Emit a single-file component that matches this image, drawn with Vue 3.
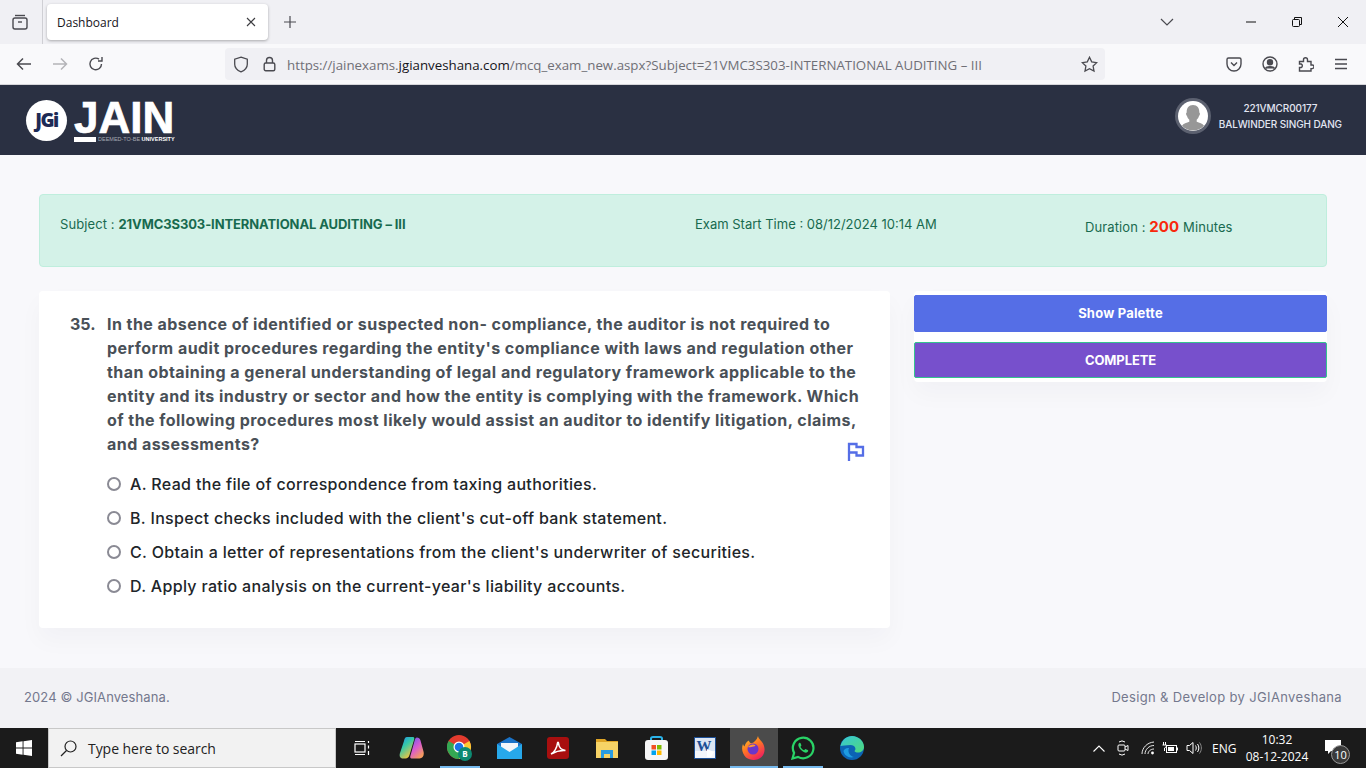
<script setup>
const question = [
  'In the absence of identified or suspected non- compliance, the auditor is not required to',
  "perform audit procedures regarding the entity's compliance with laws and regulation other",
  'than obtaining a general understanding of legal and regulatory framework applicable to the',
  'entity and its industry or sector and how the entity is complying with the framework. Which',
  'of the following procedures most likely would assist an auditor to identify litigation, claims,',
  'and assessments?',
]

const options = [
  'A. Read the file of correspondence from taxing authorities.',
  "B. Inspect checks included with the client's cut-off bank statement.",
  'C. Obtain a letter of representations from the client\'s underwriter of securities.',
  "D. Apply ratio analysis on the current-year's liability accounts.",
]
</script>

<template>
  <div class="screen">
    <!-- browser chrome -->
    <div class="tabbar">
      <div class="tab-all">
        <svg width="18" height="18" viewBox="0 0 18 18" fill="none" stroke="#4a4a50" stroke-width="1.4">
          <path d="M4 2.500h10" />
          <rect x="2" y="5" width="14" height="11" rx="2" />
          <path d="M7 9h4" />
        </svg>
      </div>
      <div class="tab">
        <span>Dashboard</span>
        <svg width="10" height="10" viewBox="0 0 10 10" stroke="#3c3c40" stroke-width="1.1"><path d="M1 1l8 8M9 1l-8 8" /></svg>
      </div>
      <svg class="tab-new" width="14" height="14" viewBox="0 0 14 14" stroke="#4a4a50" stroke-width="1.2"><path d="M7 1v12M1 7h12" /></svg>
      <div class="grow"></div>
      <svg class="tab-list" width="14" height="8" viewBox="0 0 14 8" fill="none" stroke="#4a4a50" stroke-width="1.2"><path d="M1 1l6 6 6-6" /></svg>
      <div class="win-btns">
        <svg width="10" height="10" viewBox="0 0 10 10" stroke="#111" stroke-width="1"><path d="M0 5h10" /></svg>
        <svg width="10" height="10" viewBox="0 0 10 10" fill="none" stroke="#111" stroke-width="1"><rect x="0.5" y="2.500" width="7" height="7" rx="1" /><path d="M2.500 2.500V.5h7v7H7.500" /></svg>
        <svg width="10" height="10" viewBox="0 0 10 10" stroke="#111" stroke-width="1"><path d="M0 0l10 10M10 0L0 10" /></svg>
      </div>
    </div>

    <div class="navbar">
      <svg class="nav-ic" width="16" height="14" viewBox="0 0 16 14" fill="none" stroke="#4a4a50" stroke-width="1.5"><path d="M15 7H2M7 1.500L1.500 7 7 12.500" /></svg>
      <svg class="nav-ic" width="16" height="14" viewBox="0 0 16 14" fill="none" stroke="#b4b4b8" stroke-width="1.5"><path d="M1 7h13M9 1.500L14.500 7 9 12.500" /></svg>
      <svg class="nav-ic" width="16" height="16" viewBox="0 0 16 16" fill="none" stroke="#4a4a50" stroke-width="1.4"><path d="M13.500 8A5.800 5.800 0 1 1 11 3.200" /><path d="M14 1v4h-4" /></svg>
      <div class="urlbar">
        <svg class="url-shield" width="16" height="17" viewBox="0 0 16 17" fill="none" stroke="#4a4a50" stroke-width="1.3"><path d="M8 1.200l6.300 2v5c0 3.600-2.800 6.200-6.300 7.600-3.500-1.400-6.300-4-6.300-7.600v-5z" /></svg>
        <svg class="url-lock" width="13" height="16" viewBox="0 0 13 16" fill="none" stroke="#4a4a50" stroke-width="1.4"><path d="M3.500 7V4.500a3 3 0 0 1 6 0V7" /><rect x="1.200" y="7" width="10.600" height="7.800" rx="1.500" /></svg>
        <div class="url"><span class="dim">https://jainexams.</span>jgianveshana.com<span class="dim">/mcq_exam_new.aspx?Subject=21VMC3S303-INTERNATIONAL AUDITING – III</span></div>
        <svg width="17" height="17" viewBox="0 0 17 17" fill="none" stroke="#4a4a50" stroke-width="1.3"><path d="M8.500 1.300l2.200 4.600 5 .7-3.600 3.500.9 5-4.500-2.400L4 15.100l.9-5L1.300 6.600l5-.7z" /></svg>
      </div>
      <div class="nav-right">
        <svg width="16" height="15" viewBox="0 0 16 15" fill="none" stroke="#4a4a50" stroke-width="1.4"><path d="M2.500 1h11A1.500 1.500 0 0 1 15 2.500V7A7 7 0 0 1 1 7V2.500A1.500 1.500 0 0 1 2.500 1z" /><path d="M5 5.500l3 3 3-3" /></svg>
        <svg width="16" height="16" viewBox="0 0 16 16" fill="none" stroke="#4a4a50" stroke-width="1.4"><circle cx="8" cy="8" r="7" /><circle cx="8" cy="6.300" r="2.500" fill="#4a4a50" /><path d="M3.500 12.500c1-2.300 8-2.300 9 0" fill="#4a4a50" /></svg>
        <svg width="16" height="16" viewBox="0 0 16 16" fill="none" stroke="#4a4a50" stroke-width="1.4"><path d="M1.500 5.500h4V3.800a2 2 0 0 1 4 0v1.700h3.500V9h1.200a1.800 1.800 0 0 1 0 3.600H13V15H1.500v-3.500h1.700a1.900 1.900 0 0 0 0-3.500H1.500z" /></svg>
        <svg width="14" height="12" viewBox="0 0 14 12" stroke="#4a4a50" stroke-width="1.400"><path d="M1 1.500h12M1 6h12M1 10.500h12" /></svg>
      </div>
    </div>

    <!-- site header -->
    <header class="site-header">
      <div class="logo">
        <div class="logo-badge">JGi</div>
        <div class="logo-word">
          <div class="logo-jain">JAIN</div>
          <div class="logo-sub"><i></i><span>DEEMED-TO-BE <b>UNIVERSITY</b></span></div>
        </div>
      </div>
      <div class="user">
        <div class="avatar">
          <svg width="30" height="30" viewBox="0 0 30 30"><circle cx="15" cy="15" r="15" fill="#fff" /><path d="M15 4c4.500 0 6.500 3.500 6.300 7.500.9.300.9 2.500-.3 3.500-.5 1.800-1.300 3-2.300 3.800v2c2.500 1 6 1.700 7.300 4a15 15 0 0 1-22 0c1.300-2.300 4.800-3 7.300-4v-2c-1-.8-1.800-2-2.300-3.800-1.200-1-1.200-3.200-.3-3.500C8.500 7.500 10.500 4 15 4z" fill="#979797" /></svg>
        </div>
        <div class="user-text">
          <div>221VMCR00177</div>
          <div>BALWINDER SINGH DANG</div>
        </div>
      </div>
    </header>

    <main class="content">
      <div class="alert">
        <div class="alert-subject">Subject : <b>21VMC3S303-INTERNATIONAL AUDITING – III</b></div>
        <div class="alert-start">Exam Start Time : 08/12/2024 10:14 AM</div>
        <div class="alert-duration">Duration : <b>200</b> Minutes</div>
      </div>

      <div class="columns">
        <section class="q-card">
          <div class="q-head">
            <div class="q-num">35.</div>
            <div class="q-text">
              <div v-for="line in question" :key="line">{{ line }}</div>
            </div>
          </div>
          <div class="q-flag">
            <svg width="18" height="19" viewBox="0 0 18 19" fill="none" stroke="#556ee6" stroke-width="2.300"><path d="M2 19V2h7.500v3H16v8.500H9.500v-3H2" /></svg>
          </div>
          <div class="options">
            <label v-for="opt in options" :key="opt" class="option">
              <span class="radio"></span>
              <span>{{ opt }}</span>
            </label>
          </div>
        </section>

        <aside class="side">
          <button class="btn btn-palette">Show Palette</button>
          <button class="btn btn-complete">COMPLETE</button>
        </aside>
      </div>
    </main>

    <footer class="site-footer">
      <span>2024 © JGIAnveshana.</span>
      <span class="foot-right">Design &amp; Develop by JGIAnveshana</span>
    </footer>

    <!-- windows taskbar -->
    <div class="taskbar">
      <div class="start">
        <svg width="16" height="16" viewBox="0 0 16 16" fill="#fff"><path d="M0 2.300L6.600 1.300V7.500H0zM7.500 1.200L16 0v7.500H7.500zM0 8.400h6.600v6.300L0 13.700zM7.500 8.400H16V16l-8.500-1.200z" /></svg>
      </div>
      <div class="search">
        <svg width="17" height="17" viewBox="0 0 17 17" fill="none" stroke="#222" stroke-width="1.200"><circle cx="10.500" cy="6.500" r="5.500" /><path d="M6.500 10.500L1 16" /></svg>
        <span>Type here to search</span>
      </div>
      <div class="apps">
        <div class="app">
          <svg width="16" height="16" viewBox="0 0 16 16" fill="none" stroke="#fff" stroke-width="1.200"><rect x="1" y="4" width="10" height="8" /><path d="M1 1.500h10M1 14.500h10M14.500 1v2M14.500 5.500v3M14.500 11v4" /></svg>
        </div>
        <div class="app">
          <svg width="25" height="24" viewBox="0 0 25 24">
            <defs>
              <linearGradient id="cpA" x1="0" y1="0" x2="0.6" y2="1"><stop offset="0" stop-color="#1f8cf0" /><stop offset="0.45" stop-color="#35c9a8" /><stop offset="1" stop-color="#f7c63c" /></linearGradient>
              <linearGradient id="cpB" x1="0" y1="0" x2="0.6" y2="1"><stop offset="0" stop-color="#5a5cf0" /><stop offset="0.55" stop-color="#d95cd0" /><stop offset="1" stop-color="#f59a60" /></linearGradient>
            </defs>
            <path d="M8 1h6c1.500 0 1.500 1.500 1 3l-4.500 15c-.6 2-2 3.500-4 3.500H4c-3 0-4-2.500-3-5.500L5 5c.6-2.500 1.200-4 3-4z" fill="url(#cpA)" />
            <path d="M18 1.500c1.500 0 3 1 3.500 3l3 11c.9 3.500-.5 7-4 7h-8c-1.500 0-1.500-1.500-1-3l4-14.500C16 3 16.500 1.500 18 1.500z" fill="url(#cpB)" />
          </svg>
        </div>
        <div class="app active-line">
          <svg width="26" height="26" viewBox="0 0 26 26">
            <circle cx="12" cy="12" r="12" fill="#e33b2e" />
            <path d="M12 12L22.400 6A12 12 0 0 1 12 24z" fill="#fcc934" />
            <path d="M12 12L12 24A12 12 0 0 1 1.600 6z" fill="#34a853" />
            <circle cx="12" cy="12" r="5.500" fill="#fff" /><circle cx="12" cy="12" r="4.300" fill="#1a73e8" />
            <circle cx="18" cy="19" r="7" fill="#0d8a72" />
            <text x="18" y="22" text-anchor="middle" class="b-letter">B</text>
          </svg>
        </div>
        <div class="app">
          <svg width="25" height="22" viewBox="0 0 25 22">
            <path d="M0 7L12.500 0 25 7v15H0z" fill="#1a73c8" />
            <path d="M4 6h17v6l-8.500 5L4 12z" fill="#f2f6fa" />
            <path d="M0 7l12.500 8L25 7v15H0z" fill="#27a8ea" />
          </svg>
        </div>
        <div class="app">
          <svg width="22" height="22" viewBox="0 0 22 22">
            <rect width="22" height="22" rx="3" fill="#a80f0f" />
            <path d="M4 17c3-1.500 6-6 6.500-11 0-1 1-1 1 0 .3 4 3 7 7 7.500-3.500-.3-9 .5-14.500 3.500z" fill="none" stroke="#fff" stroke-width="1.500" />
          </svg>
        </div>
        <div class="app">
          <svg width="22" height="20" viewBox="0 0 22 20">
            <path d="M0 1h9l2 2h11v17H0z" fill="#e0a526" />
            <rect y="4" width="22" height="16" fill="#f7d366" />
            <path d="M5 12h12v8h-3v-4H8v4H5z" fill="#2a9ce0" />
          </svg>
        </div>
        <div class="app">
          <svg width="23" height="24" viewBox="0 0 23 24">
            <path d="M6 5V2.500C6 1 7 1 8 1h7c1 0 2 0 2 1.500V5" fill="none" stroke="#2bb3e8" stroke-width="2" />
            <rect y="4" width="23" height="20" rx="3" fill="#f6f6f6" />
            <rect x="6.500" y="9" width="4.500" height="4.500" fill="#f25022" /><rect x="12" y="9" width="4.500" height="4.500" fill="#7fba00" />
            <rect x="6.500" y="14.500" width="4.500" height="4.500" fill="#00a4ef" /><rect x="12" y="14.500" width="4.500" height="4.500" fill="#ffb900" />
          </svg>
        </div>
        <div class="app">
          <svg width="22" height="22" viewBox="0 0 22 22">
            <rect width="22" height="22" fill="#1c4f96" />
            <rect x="1" y="1" width="20" height="20" fill="#f4f6fa" />
            <rect x="1" y="1" width="20" height="13" fill="#dbe6f4" />
            <text x="10" y="14" text-anchor="middle" class="w-letter">W</text>
            <path d="M13 12l7 3-3 5h-4z" fill="#fff" />
          </svg>
        </div>
        <div class="app app-on active-line">
          <svg width="24" height="24" viewBox="0 0 24 24">
            <defs>
              <linearGradient id="ffA" x1="0" y1="0" x2="0.6" y2="1"><stop offset="0" stop-color="#ffd02c" /><stop offset="0.5" stop-color="#ff7a22" /><stop offset="1" stop-color="#f0255a" /></linearGradient>
            </defs>
            <path d="M16 0c.5 3 3 4 5 7.500 2.500 4.500 2 10-1.500 13.500-4 3.800-11 3.800-15.500.5C.5 18 -1 13 1 8c.3 1.200.8 2 1.500 2.500C3 8 4.500 5.500 7 4.500c0 1.500 1 2.500 2.500 2.800C12 6.500 15 4 16 0z" fill="url(#ffA)" />
            <circle cx="11" cy="13" r="5.500" fill="#6b35c9" />
            <path d="M6 11c1.500-2 5-3.500 7-2 .8.500 0 1.500-1.500 1.500C9.500 10.500 7.500 12 6 11z" fill="#ff9a2e" />
          </svg>
        </div>
        <div class="app active-line">
          <svg width="24" height="24" viewBox="0 0 24 24">
            <path d="M1.500 22.500l1.600-5.600A10.300 10.300 0 1 1 7 20.900z" fill="none" stroke="#29d366" stroke-width="2.200" />
            <path d="M8.500 6.800c-1.300.8-1.500 2.500-.6 4.300 1.100 2.300 3 4.200 5.300 5.200 1.800.7 3.300.3 3.900-1 .3-.6 0-1-.4-1.200l-1.800-.9c-.5-.2-.8 0-1.100.4-.4.600-.7.700-1.300.4-1.200-.6-2.200-1.600-2.800-2.800-.2-.5-.1-.8.300-1.100.4-.4.500-.7.300-1.200l-.7-1.700c-.2-.6-.7-.7-1.100-.400z" fill="#29d366" />
          </svg>
        </div>
        <div class="app">
          <svg width="24" height="24" viewBox="0 0 24 24">
            <defs>
              <linearGradient id="edA" x1="0" y1="0" x2="1" y2="1"><stop offset="0" stop-color="#37c7d8" /><stop offset="1" stop-color="#4fd97a" /></linearGradient>
            </defs>
            <circle cx="12" cy="12" r="12" fill="#0c63b4" />
            <path d="M0.500 10C2 3.500 7 0 12 0c6.500 0 12 5 12 11 0 3.500-3 5.500-6 5.500-2 0-3.500-.6-3.500-1.500 2-1.500 1-6-4-6-4.500 0-8 1-10.500 1z" fill="url(#edA)" />
            <path d="M9 12c-1.500 3 0 8 5 9-5 1.500-10-1.500-10.500-6C4 13 6.500 11.500 9 12z" fill="#1e9be0" />
          </svg>
        </div>
      </div>
      <div class="grow"></div>
      <div class="tray">
        <svg class="t-chev" width="12" height="7" viewBox="0 0 12 7" fill="none" stroke="#fff" stroke-width="1.100"><path d="M.5 6.500L6 1l5.500 5.500" /></svg>
        <svg class="t-meet" width="12" height="18" viewBox="0 0 12 18" fill="none" stroke="#fff" stroke-width="1"><path d="M2 3a5 5 0 0 1 6 0M2 15a5 5 0 0 0 6 0" /><rect x="1" y="6" width="7" height="6" rx="1" /><path d="M8 8l3-1.500v5L8 10" /></svg>
        <svg class="t-wifi" width="14" height="14" viewBox="0 0 14 14" fill="none" stroke="#fff" stroke-width=".9"><path d="M1 13C1 7 6 1.500 13 1M4 13c0-4.500 4-8.500 9-8.500M7 13c0-2.500 2.500-5 6-5" /><circle cx="11.500" cy="12" r="1.400" fill="#fff" stroke="none" /></svg>
        <svg class="t-batt" width="16" height="12" viewBox="0 0 16 12" fill="none" stroke="#fff" stroke-width="1"><rect x="4.500" y="3.500" width="10" height="7" /><rect x="6" y="5" width="6" height="4" fill="#fff" stroke="none" /><path d="M15.500 5.500v3" /><path d="M1.500 0v3M3.500 0v3M.5 3h4v1.500L2.500 6v3" /></svg>
        <svg class="t-vol" width="16" height="14" viewBox="0 0 16 14" fill="none" stroke="#fff" stroke-width="1"><path d="M1 4.500h2.500L7 1.500v11l-3.500-3H1zM9.500 4.500c1 1.500 1 3.500 0 5M11.500 3c1.800 2.300 1.800 5.700 0 8" /><path d="M13.500 1.500c2.500 3.300 2.500 7.700 0 11" stroke="#888" /></svg>
        <span class="t-lang">ENG</span>
        <div class="t-clock"><div>10:32</div><div>08-12-2024</div></div>
        <div class="t-note">
          <svg width="16" height="15" viewBox="0 0 16 15" fill="#fff"><path d="M0 0h16v11H6l-3 3v-3H0z" /></svg>
          <span class="t-badge">10</span>
        </div>
      </div>
    </div>
  </div>
</template>

<style scoped>
.screen {
  width: 1366px;
  height: 768px;
  display: flex;
  flex-direction: column;
  overflow: hidden;
  background: #f8f8fb;
  font-family: Inter, "Liberation Sans", sans-serif;
}
.grow { flex: 1; }

/* browser */
.tabbar {
  height: 44px;
  background: #f0f0f4;
  display: flex;
  align-items: center;
  flex-shrink: 0;
}
.tab-all {
  width: 43px;
  height: 44px;
  border-right: 1px solid #cfcfd4;
  display: flex;
  align-items: center;
  justify-content: center;
  box-sizing: border-box;
  padding-right: 3px;
}
.tab {
  margin-left: 4px;
  width: 221px;
  height: 36px;
  box-sizing: border-box;
  padding: 0 12px 0 10px;
  background: #fff;
  border-radius: 4px;
  box-shadow: 0 1px 3px rgba(0, 0, 0, .3);
  display: flex;
  align-items: center;
  justify-content: space-between;
  font: 12px "Open Sans", sans-serif;
  color: #15141a;
}
.tab-new { margin-left: 15px; }
.tab-list { margin-right: 72px; }
.win-btns {
  display: flex;
  gap: 36px;
  margin-right: 18px;
}
.navbar {
  height: 41px;
  background: #f9f9fb;
  border-bottom: 1px solid #d6d6da;
  box-sizing: border-box;
  display: flex;
  align-items: center;
  padding-left: 16px;
  flex-shrink: 0;
}
.nav-ic { margin-right: 20px; }
.urlbar {
  margin-left: 101px;
  width: 880px;
  height: 32px;
  background: #f0f0f4;
  border-radius: 4px;
  display: flex;
  align-items: center;
  padding: 0 7px 0 8px;
  box-sizing: border-box;
}
.url-lock { margin-left: 14px; }
.url {
  flex: 1;
  margin-left: 11px;
  padding-top: 1px;
  font: 13.300px "Open Sans", sans-serif;
  color: #15141a;
  white-space: nowrap;
}
.url .dim { color: #6f6f76; }
.nav-right {
  margin-left: 121px;
  display: flex;
  align-items: center;
  gap: 20px;
}

/* site header */
.site-header {
  height: 70px;
  background: #2a3042;
  flex-shrink: 0;
  display: flex;
  align-items: center;
  justify-content: space-between;
  padding: 0 24px 0 26px;
}
.logo { display: flex; align-items: center; gap: 8px; }
.logo-badge {
  width: 41px;
  height: 41px;
  border-radius: 50%;
  background: #fff;
  color: #1d2a55;
  font: 800 19px/41px "Open Sans", sans-serif;
  letter-spacing: -1.500px;
  text-align: center;
}
.logo-word { margin-top: 1px; margin-left: -1px; }
.logo-jain {
  font: 700 44px/35px "Liberation Sans", sans-serif;
  -webkit-text-stroke: .7px #fff;
  color: #fff;
  height: 35px;
}
.logo-sub {
  display: flex;
  align-items: center;
  gap: 2px;
  margin-top: 2px;
  font: 5.500px/5px "Liberation Sans", sans-serif;
  color: #a6a9b3;
  white-space: nowrap;
}
.logo-sub i { display: block; width: 22px; height: 5px; background: #fff; }
.logo-sub b { color: #fff; }
.user { display: flex; align-items: center; gap: 8px; margin-bottom: 8px; }
.avatar {
  width: 36px;
  height: 36px;
  border-radius: 50%;
  background: #5c6170;
  display: flex;
  align-items: center;
  justify-content: center;
}
.user-text {
  font: 500 10px/16px Inter, sans-serif;
  letter-spacing: -.1px;
  color: #e3e6f2;
  text-align: center;
  white-space: nowrap;
}

/* page */
.content {
  flex: 1;
  padding: 39px 39px 0;
  box-sizing: border-box;
}
.alert {
  height: 73px;
  box-sizing: border-box;
  background: #d4f2e8;
  border: 1px solid #bfeedd;
  border-radius: 4px;
  color: #186a4f;
  font-size: 13px;
  display: flex;
  position: relative;
}
.alert-subject { margin: 21px 0 0 20px; width: 635px; white-space: nowrap; letter-spacing: .1px; }
.alert-subject b { letter-spacing: -.1px; }
.alert-start { margin: 21px 0 0 0; width: 390px; white-space: nowrap; }
.alert-duration { margin: 22px 0 0 0; white-space: nowrap; letter-spacing: .1px; }
.alert-duration b { color: #f8280c; font-size: 15px; }
.columns {
  display: flex;
  gap: 24px;
  margin-top: 24px;
  align-items: flex-start;
}
.q-card {
  width: 851px;
  height: 337px;
  box-sizing: border-box;
  background: #fff;
  border-radius: 4px;
  box-shadow: 0 12px 24px rgba(18, 38, 63, .03);
  padding: 21px 24px 0 31px;
}
.q-head { display: flex; }
.q-num {
  width: 37px;
  font: 700 16px/24px Inter, sans-serif;
  color: #495057;
}
.q-text {
  font: 700 16px/24px Inter, sans-serif;
  letter-spacing: .45px;
  color: #495057;
  white-space: nowrap;
}
.q-flag {
  height: 0;
  display: flex;
  justify-content: flex-end;
  transform: translate(-1px, -14px);
}
.options {
  margin: 11px 0 0 37px;
  display: flex;
  flex-direction: column;
}
.option {
  display: flex;
  align-items: center;
  gap: 9px;
  height: 34px;
  font: 500 16px/24px Inter, sans-serif;
  letter-spacing: .33px;
  color: #212529;
  white-space: nowrap;
}
.radio {
  width: 14px;
  height: 14px;
  box-sizing: border-box;
  border: 2px solid #8a8a94;
  border-radius: 50%;
}
.side {
  width: 413px;
  background: #fff;
  border-radius: 4px;
  box-shadow: 0 12px 24px rgba(18, 38, 63, .03);
  padding: 4px 0;
  display: flex;
  flex-direction: column;
  gap: 10px;
}
.btn {
  display: block;
  width: 100%;
  box-sizing: border-box;
  border: 1px solid transparent;
  border-radius: 2px;
  color: #fff;
  font: 700 13px/18px Inter, sans-serif;
  text-align: center;
}
.btn-palette { height: 37px; background: #556ee6; border-color: #556ee6; padding-bottom: 3px; letter-spacing: .2px; }
.btn-complete { height: 36px; background: #7750cc; border-color: #34c38f; letter-spacing: -.1px; }

.site-footer {
  height: 60px;
  flex-shrink: 0;
  background: #f2f2f5;
  display: flex;
  align-items: center;
  justify-content: space-between;
  padding: 0 24px 2px;
  box-sizing: border-box;
  font-size: 13px;
  letter-spacing: .1px;
  color: #74788d;
}
.foot-right { letter-spacing: .35px; }

/* taskbar */
.taskbar {
  height: 40px;
  background: #1b1b1b;
  display: flex;
  align-items: stretch;
  flex-shrink: 0;
}
.start {
  width: 48px;
  display: flex;
  align-items: center;
  justify-content: center;
}
.search {
  width: 288px;
  box-sizing: border-box;
  background: #f2f2f2;
  border: 1px solid #c8c8c8;
  display: flex;
  align-items: center;
  gap: 11px;
  padding-left: 11px;
  font: 14px "Open Sans", sans-serif;
  letter-spacing: -.05px;
  color: #222;
}
.apps { display: flex; padding-left: 2px; }
.app {
  width: 48px;
  margin-right: 1px;
  display: flex;
  align-items: center;
  justify-content: center;
  position: relative;
}
.app-on { background: #4b4b4b; }
.active-line::after {
  content: "";
  position: absolute;
  left: 4px;
  right: 4px;
  bottom: 0;
  height: 2px;
  background: #76b9ed;
}
.app-on.active-line::after { left: 0; right: 0; }
.b-letter { font: 700 8px "Open Sans", sans-serif; fill: #fff; }
.w-letter { font: 700 15px "Liberation Serif", serif; fill: #1c4f96; }
.tray {
  display: flex;
  align-items: center;
  color: #fff;
  font: 12px "Open Sans", sans-serif;
  position: relative;
}
.t-chev { margin-right: 12px; }
.t-meet { margin-right: 12px; }
.t-wifi { margin-right: 7px; }
.t-batt { margin-right: 8px; }
.t-vol { margin-right: 10px; }
.t-lang { width: 33px; }
.t-clock {
  width: 64px;
  text-align: center;
  line-height: 17px;
  margin-right: 11px;
}
.t-note { width: 46px; height: 40px; position: relative; }
.t-note svg { position: absolute; left: 5px; top: 12px; }
.t-badge {
  position: absolute;
  left: 11px;
  top: 17px;
  width: 19px;
  height: 19px;
  border-radius: 50%;
  background: #3a3a3a;
  border: 1px solid #999;
  box-sizing: border-box;
  font-size: 11px;
  line-height: 17px;
  text-align: center;
}
</style>
